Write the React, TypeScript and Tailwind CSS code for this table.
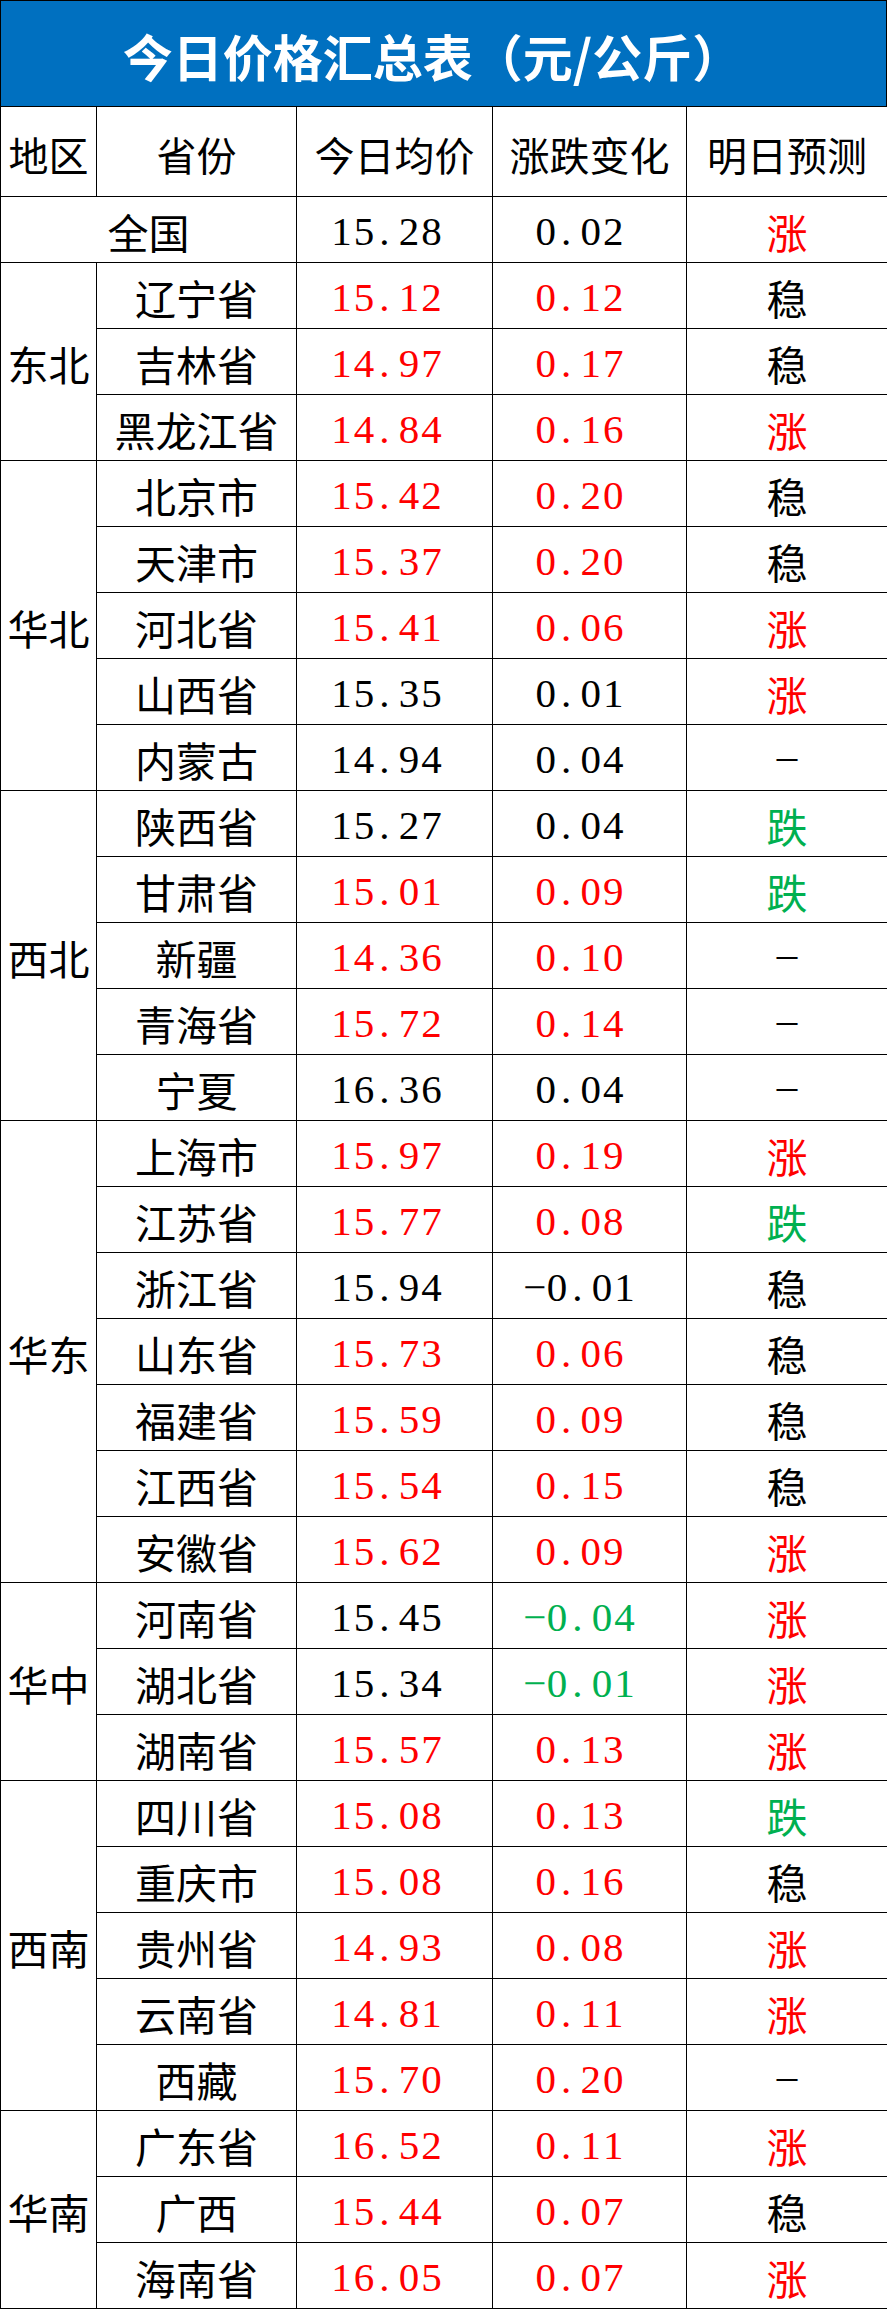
import React from "react";

type Row = {
  name: string;
  price: string;
  change: string;
  trend: string;
  pc?: string; // price colour
  cc?: string; // change colour
};

const RED = "text-[#ff0000]";
const GREEN = "text-[#00b050]";
const BLACK = "text-black";

const groups: { region: string; rows: Row[] }[] = [
  {
    region: "东北",
    rows: [
      { name: "辽宁省", price: "15.12", change: "0.12", trend: "稳", pc: RED, cc: RED },
      { name: "吉林省", price: "14.97", change: "0.17", trend: "稳", pc: RED, cc: RED },
      { name: "黑龙江省", price: "14.84", change: "0.16", trend: "涨", pc: RED, cc: RED },
    ],
  },
  {
    region: "华北",
    rows: [
      { name: "北京市", price: "15.42", change: "0.20", trend: "稳", pc: RED, cc: RED },
      { name: "天津市", price: "15.37", change: "0.20", trend: "稳", pc: RED, cc: RED },
      { name: "河北省", price: "15.41", change: "0.06", trend: "涨", pc: RED, cc: RED },
      { name: "山西省", price: "15.35", change: "0.01", trend: "涨" },
      { name: "内蒙古", price: "14.94", change: "0.04", trend: "-" },
    ],
  },
  {
    region: "西北",
    rows: [
      { name: "陕西省", price: "15.27", change: "0.04", trend: "跌" },
      { name: "甘肃省", price: "15.01", change: "0.09", trend: "跌", pc: RED, cc: RED },
      { name: "新疆", price: "14.36", change: "0.10", trend: "-", pc: RED, cc: RED },
      { name: "青海省", price: "15.72", change: "0.14", trend: "-", pc: RED, cc: RED },
      { name: "宁夏", price: "16.36", change: "0.04", trend: "-" },
    ],
  },
  {
    region: "华东",
    rows: [
      { name: "上海市", price: "15.97", change: "0.19", trend: "涨", pc: RED, cc: RED },
      { name: "江苏省", price: "15.77", change: "0.08", trend: "跌", pc: RED, cc: RED },
      { name: "浙江省", price: "15.94", change: "-0.01", trend: "稳" },
      { name: "山东省", price: "15.73", change: "0.06", trend: "稳", pc: RED, cc: RED },
      { name: "福建省", price: "15.59", change: "0.09", trend: "稳", pc: RED, cc: RED },
      { name: "江西省", price: "15.54", change: "0.15", trend: "稳", pc: RED, cc: RED },
      { name: "安徽省", price: "15.62", change: "0.09", trend: "涨", pc: RED, cc: RED },
    ],
  },
  {
    region: "华中",
    rows: [
      { name: "河南省", price: "15.45", change: "-0.04", trend: "涨", cc: GREEN },
      { name: "湖北省", price: "15.34", change: "-0.01", trend: "涨", cc: GREEN },
      { name: "湖南省", price: "15.57", change: "0.13", trend: "涨", pc: RED, cc: RED },
    ],
  },
  {
    region: "西南",
    rows: [
      { name: "四川省", price: "15.08", change: "0.13", trend: "跌", pc: RED, cc: RED },
      { name: "重庆市", price: "15.08", change: "0.16", trend: "稳", pc: RED, cc: RED },
      { name: "贵州省", price: "14.93", change: "0.08", trend: "涨", pc: RED, cc: RED },
      { name: "云南省", price: "14.81", change: "0.11", trend: "涨", pc: RED, cc: RED },
      { name: "西藏", price: "15.70", change: "0.20", trend: "-", pc: RED, cc: RED },
    ],
  },
  {
    region: "华南",
    rows: [
      { name: "广东省", price: "16.52", change: "0.11", trend: "涨", pc: RED, cc: RED },
      { name: "广西", price: "15.44", change: "0.07", trend: "稳", pc: RED, cc: RED },
      { name: "海南省", price: "16.05", change: "0.07", trend: "涨", pc: RED, cc: RED },
    ],
  },
];

const cjk = "font-['Noto_Sans_CJK_SC',sans-serif]";
const serif = "font-['Liberation_Serif',serif]";
const cell = "border border-black h-[66px] p-0 pt-1 text-center align-middle leading-none";

// SimSun-like half-width digits: every char gets the same cell
const Num = ({ v }: { v: string }) => (
  <span className={`inline-flex ${serif} text-[41px]`}>
    {v.split("").map((c, i) => (
      <span
        key={i}
        className={c === "." ? "inline-block w-[22.5px] text-left pl-1" : "inline-block w-[22.5px] text-center"}
      >
        {c === "-" ? "−" : c}
      </span>
    ))}
  </span>
);

const Trend = ({ t }: { t: string }) => {
  if (t === "-") return <span className={`${serif} text-[41px] relative -top-1`}>–</span>;
  const color = t === "涨" ? RED : t === "跌" ? GREEN : BLACK;
  return <span className={`${cjk} text-[41px] ${color}`}>{t}</span>;
};

const Cells = ({ r }: { r: Row }) => (
  <>
    <td className={`${cell} ${cjk} text-[41px]`}>{r.name}</td>
    <td className={`${cell} pr-4 ${r.pc ?? BLACK}`}>
      <Num v={r.price} />
    </td>
    <td className={`${cell} pr-5 ${r.cc ?? BLACK}`}>
      <Num v={r.change} />
    </td>
    <td className={cell}>
      <Trend t={r.trend} />
    </td>
  </>
);

export default function App() {
  return (
    <div className="w-[887px] bg-white text-black">
      <div
        className={`h-[106px] bg-[#0070c0] border-t border-x border-black flex items-center justify-center pr-[22px] pt-1 text-white text-[50px] font-bold ${cjk}`}
      >
        今日价格汇总表（元/公斤）
      </div>
      <table className="w-[887px] table-fixed border-collapse">
        <colgroup>
          <col className="w-[96px]" />
          <col className="w-[200px]" />
          <col className="w-[196px]" />
          <col className="w-[194px]" />
          <col className="w-[201px]" />
        </colgroup>
        <thead>
          <tr>
            {["地区", "省份", "今日均价", "涨跌变化", "明日预测"].map((h) => (
              <th
                key={h}
                className={`border border-black h-[90px] p-0 pt-1 text-center align-middle font-normal leading-none text-[40px] ${cjk}`}
              >
                {h}
              </th>
            ))}
          </tr>
        </thead>
        <tbody>
          <tr>
            <td colSpan={2} className={`${cell} ${cjk} text-[41px]`}>
              全国
            </td>
            <td className={`${cell} pr-4`}>
              <Num v="15.28" />
            </td>
            <td className={`${cell} pr-5`}>
              <Num v="0.02" />
            </td>
            <td className={cell}>
              <Trend t="涨" />
            </td>
          </tr>
          {groups.map((g) =>
            g.rows.map((r, i) => (
              <tr key={g.region + r.name}>
                {i === 0 && (
                  <td rowSpan={g.rows.length} className={`${cell} ${cjk} text-[41px]`}>
                    {g.region}
                  </td>
                )}
                <Cells r={r} />
              </tr>
            ))
          )}
        </tbody>
      </table>
    </div>
  );
}
